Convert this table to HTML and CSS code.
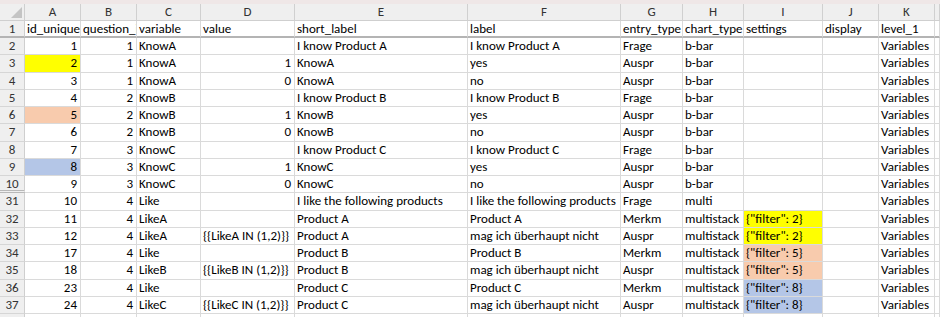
FILE: index.html
```html
<!DOCTYPE html>
<html>
<head>
<meta charset="utf-8">
<link rel="stylesheet" href="styles.css">
</head>
<body>
<div class="band"></div>
<div class="sheet">
  <div class="corner"><span class="tri"></span></div>
  <div class="ch">A</div><div class="ch">B</div><div class="ch">C</div><div class="ch">D</div><div class="ch">E</div><div class="ch">F</div><div class="ch">G</div><div class="ch">H</div><div class="ch">I</div><div class="ch">J</div><div class="ch">K</div><div class="ch"></div>

  <div class="rh fr">1</div><div class="c fr">id_unique</div><div class="c fr clip">question_id</div><div class="c fr">variable</div><div class="c fr">value</div><div class="c fr">short_label</div><div class="c fr">label</div><div class="c fr">entry_type</div><div class="c fr">chart_type</div><div class="c fr">settings</div><div class="c fr">display</div><div class="c fr">level_1</div><div class="c fr"></div>

  <div class="rh">2</div><div class="c n">1</div><div class="c n">1</div><div class="c">KnowA</div><div class="c"></div><div class="c">I know Product A</div><div class="c">I know Product A</div><div class="c">Frage</div><div class="c">b-bar</div><div class="c"></div><div class="c"></div><div class="c">Variables</div><div class="c"></div>

  <div class="rh">3</div><div class="c n yel">2</div><div class="c n">1</div><div class="c">KnowA</div><div class="c n">1</div><div class="c">KnowA</div><div class="c">yes</div><div class="c">Auspr</div><div class="c">b-bar</div><div class="c"></div><div class="c"></div><div class="c">Variables</div><div class="c"></div>

  <div class="rh">4</div><div class="c n">3</div><div class="c n">1</div><div class="c">KnowA</div><div class="c n">0</div><div class="c">KnowA</div><div class="c">no</div><div class="c">Auspr</div><div class="c">b-bar</div><div class="c"></div><div class="c"></div><div class="c">Variables</div><div class="c"></div>

  <div class="rh">5</div><div class="c n">4</div><div class="c n">2</div><div class="c">KnowB</div><div class="c"></div><div class="c">I know Product B</div><div class="c">I know Product B</div><div class="c">Frage</div><div class="c">b-bar</div><div class="c"></div><div class="c"></div><div class="c">Variables</div><div class="c"></div>

  <div class="rh">6</div><div class="c n pea">5</div><div class="c n">2</div><div class="c">KnowB</div><div class="c n">1</div><div class="c">KnowB</div><div class="c">yes</div><div class="c">Auspr</div><div class="c">b-bar</div><div class="c"></div><div class="c"></div><div class="c">Variables</div><div class="c"></div>

  <div class="rh">7</div><div class="c n">6</div><div class="c n">2</div><div class="c">KnowB</div><div class="c n">0</div><div class="c">KnowB</div><div class="c">no</div><div class="c">Auspr</div><div class="c">b-bar</div><div class="c"></div><div class="c"></div><div class="c">Variables</div><div class="c"></div>

  <div class="rh">8</div><div class="c n">7</div><div class="c n">3</div><div class="c">KnowC</div><div class="c"></div><div class="c">I know Product C</div><div class="c">I know Product C</div><div class="c">Frage</div><div class="c">b-bar</div><div class="c"></div><div class="c"></div><div class="c">Variables</div><div class="c"></div>

  <div class="rh">9</div><div class="c n blu">8</div><div class="c n">3</div><div class="c">KnowC</div><div class="c n">1</div><div class="c">KnowC</div><div class="c">yes</div><div class="c">Auspr</div><div class="c">b-bar</div><div class="c"></div><div class="c"></div><div class="c">Variables</div><div class="c"></div>

  <div class="rh hid">10</div><div class="c n">9</div><div class="c n">3</div><div class="c">KnowC</div><div class="c n">0</div><div class="c">KnowC</div><div class="c">no</div><div class="c">Auspr</div><div class="c">b-bar</div><div class="c"></div><div class="c"></div><div class="c">Variables</div><div class="c"></div>

  <div class="rh">31</div><div class="c n">10</div><div class="c n">4</div><div class="c">Like</div><div class="c"></div><div class="c">I like the following products</div><div class="c">I like the following products</div><div class="c">Frage</div><div class="c">multi</div><div class="c"></div><div class="c"></div><div class="c">Variables</div><div class="c"></div>

  <div class="rh">32</div><div class="c n">11</div><div class="c n">4</div><div class="c">LikeA</div><div class="c"></div><div class="c">Product A</div><div class="c">Product A</div><div class="c">Merkm</div><div class="c">multistack</div><div class="c yel">{"filter": 2}</div><div class="c"></div><div class="c">Variables</div><div class="c"></div>

  <div class="rh">33</div><div class="c n">12</div><div class="c n">4</div><div class="c">LikeA</div><div class="c">{{LikeA IN (1,2)}}</div><div class="c">Product A</div><div class="c">mag ich überhaupt nicht</div><div class="c">Auspr</div><div class="c">multistack</div><div class="c yel">{"filter": 2}</div><div class="c"></div><div class="c">Variables</div><div class="c"></div>

  <div class="rh">34</div><div class="c n">17</div><div class="c n">4</div><div class="c">Like</div><div class="c"></div><div class="c">Product B</div><div class="c">Product B</div><div class="c">Merkm</div><div class="c">multistack</div><div class="c pea">{"filter": 5}</div><div class="c"></div><div class="c">Variables</div><div class="c"></div>

  <div class="rh">35</div><div class="c n">18</div><div class="c n">4</div><div class="c">LikeB</div><div class="c">{{LikeB IN (1,2)}}</div><div class="c">Product B</div><div class="c">mag ich überhaupt nicht</div><div class="c">Auspr</div><div class="c">multistack</div><div class="c pea">{"filter": 5}</div><div class="c"></div><div class="c">Variables</div><div class="c"></div>

  <div class="rh">36</div><div class="c n">23</div><div class="c n">4</div><div class="c">Like</div><div class="c"></div><div class="c">Product C</div><div class="c">Product C</div><div class="c">Merkm</div><div class="c">multistack</div><div class="c blu">{"filter": 8}</div><div class="c"></div><div class="c">Variables</div><div class="c"></div>

  <div class="rh">37</div><div class="c n">24</div><div class="c n">4</div><div class="c">LikeC</div><div class="c">{{LikeC IN (1,2)}}</div><div class="c">Product C</div><div class="c">mag ich überhaupt nicht</div><div class="c">Auspr</div><div class="c">multistack</div><div class="c blu">{"filter": 8}</div><div class="c"></div><div class="c">Variables</div><div class="c"></div>

  <div class="rh"></div><div class="c"></div><div class="c"></div><div class="c"></div><div class="c"></div><div class="c"></div><div class="c"></div><div class="c"></div><div class="c"></div><div class="c"></div><div class="c"></div><div class="c"></div><div class="c"></div>
</div>
</body>
</html>
```
FILE: styles.css
```css
html, body {
  margin: 0;
  padding: 0;
  background: #ffffff;
  width: 940px;
  height: 317px;
  overflow: hidden;
}
body {
  font-family: Carlito, Calibri, Lato, "Liberation Sans", sans-serif;
  font-size: 13px;
  color: #000;
}
.band {
  height: 4px;
  background: #efe7e7;
}
.sheet {
  display: grid;
  grid-template-columns: 25px 56px 56px 64px 94px 173px 153px 62px 61px 79px 56px 56px 1fr;
  grid-template-rows: 17px 17px;
  grid-auto-rows: 17.25px;
}
.corner {
  background: #efefef;
  border-right: 1px solid #cfcfcf;
  border-bottom: 1px solid #cfcfcf;
  position: relative;
}
.tri {
  position: absolute;
  right: 2px;
  bottom: 2px;
  width: 0;
  height: 0;
  border-left: 11px solid transparent;
  border-bottom: 11px solid #c4c4c4;
}
.ch {
  background: #efefef;
  border-right: 1px solid #d0d0d0;
  border-bottom: 1px solid #cfcfcf;
  color: #333;
  text-align: center;
  line-height: 16px;
}
.rh {
  background: #efefef;
  border-right: 1px solid #cfcfcf;
  border-bottom: 1px solid #d6d6d6;
  color: #333;
  text-align: center;
  line-height: 16px;
  overflow: hidden;
}
.rh.hid {
  border-bottom: 3px double #b8b8b8;
}
.c {
  border-right: 1px solid #dadada;
  border-bottom: 1px solid #dadada;
  padding: 0 2px;
  line-height: 16px;
  white-space: nowrap;
  overflow: visible;
  min-width: 0;
}
.fr {
  border-bottom: 2px solid #b4b4b4;
  line-height: 15px;
}
.rh.fr { line-height: 15px; }
.clip { overflow: hidden; text-overflow: clip; }
.n {
  text-align: right;
  padding-right: 3px;
}
.yel { background: #ffff00; }
.pea { background: #f8cbad; }
.blu { background: #b4c6e7; }
```
